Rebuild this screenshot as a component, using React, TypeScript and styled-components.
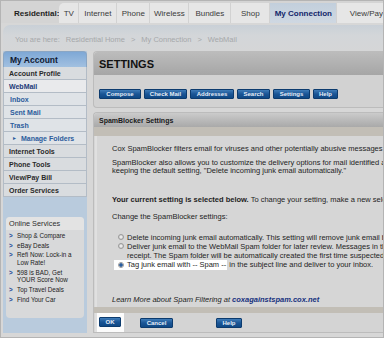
import React from "react";
import styled, { createGlobalStyle } from "styled-components";

const Global = createGlobalStyle`
  html, body {
    margin: 0;
    padding: 0;
    background: #d8d8d8;
    font-family: "Liberation Sans", Arial, sans-serif;
  }
`;

// marco general
const Frame = styled.div`
  width: 384px;
  height: 338px;
  box-sizing: border-box;
  border: 1px solid #b4b4b4;
  background: #d7d7d7;
  display: flex;
  flex-direction: column;
  overflow: hidden;
`;

// barra superior
const TopNav = styled.div`
  height: 22px;
  display: flex;
  align-items: stretch;
  background: #d4d4d4;
  font-size: 8px;
  color: #333;
`;

const NavLabel = styled.div`
  width: 65px;
  display: flex;
  align-items: center;
  padding-left: 13px;
  box-sizing: border-box;
  font-weight: bold;
  color: #1e1e1e;
  padding-top: 3px;
`;

const Tabs = styled.div`
  flex: 1;
  display: flex;
  background: #e6e6e6;
  border-top-left-radius: 5px;
  margin-top: 2px;
`;

const Tab = styled.div<{ $w: number; $active?: boolean }>`
  width: ${(p) => p.$w}px;
  flex-shrink: 0;
  display: flex;
  align-items: center;
  justify-content: center;
  white-space: nowrap;
  border-right: 1px solid #d2d2d2;
  box-sizing: border-box;
  padding-top: 1px;
  background: ${(p) => (p.$active ? "linear-gradient(#c2cfdc, #cfd8e2)" : "transparent")};
  color: ${(p) => (p.$active ? "#12256a" : "#3a3a3a")};
  font-weight: ${(p) => (p.$active ? "bold" : "normal")};
`;

const Crumbs = styled.div`
  height: 26px;
  margin: 2px 0 0 2px;
  border-top-left-radius: 7px;
  background: linear-gradient(#c9d0d7, #d3d6d9 40%, #d5d6d7);
  display: flex;
  align-items: center;
  padding: 3px 0 0 12px;
  box-sizing: border-box;
  font-size: 7.5px;
  color: #a6a8aa;
  gap: 6px;
  white-space: nowrap;
`;

const Body = styled.div`
  flex: 1;
  display: flex;
  min-height: 0;
  padding-bottom: 4px;
`;

// menu lateral
const Sidebar = styled.div`
  width: 84px;
  margin-left: 2px;
  flex-shrink: 0;
  display: flex;
  flex-direction: column;
  background: #b9cbdd;
`;

const SideHead = styled.div`
  height: 15px;
  border-radius: 4px 4px 0 0;
  background: linear-gradient(#7ea8d6, #a2c0e0);
  font-size: 8.5px;
  font-weight: bold;
  color: #0f1a33;
  display: flex;
  align-items: center;
  padding-left: 6px;
  border: 1px solid #8aa6c4;
  border-bottom: none;
`;

const SideItem = styled.div<{ $sub?: boolean; $current?: boolean }>`
  height: 13px;
  box-sizing: border-box;
  border: 1px solid #b3bcc6;
  border-top: none;
  background: ${(p) => (p.$current ? "#e9eaec" : p.$sub ? "#dfe3e7" : "#d9dcdf")};
  display: flex;
  align-items: center;
  padding-left: ${(p) => (p.$sub ? 6 : 5)}px;
  font-size: 7px;
  font-weight: bold;
  color: ${(p) => (p.$current ? "#1c3a78" : p.$sub ? "#2c5c9c" : "#2a2a2a")};
  white-space: nowrap;
`;

const Triangle = styled.span`
  font-size: 5px;
  margin: 0 4px 0 2px;
`;

const Promo = styled.div`
  margin: 20px 3px 0 3px;
  background: #d8d9da;
  border-radius: 4px;
  padding-bottom: 14px;
`;

const PromoHead = styled.div`
  height: 13px;
  display: flex;
  align-items: center;
  padding-left: 3px;
  border-radius: 4px 4px 0 0;
  background: #e3e3e3;
  font-size: 7.3px;
  color: #2e2e2e;
  margin-bottom: 1px;
`;

const PromoItem = styled.div`
  display: flex;
  font-size: 6.3px;
  line-height: 7.5px;
  color: #222;
  padding: 1.1px 2px 1.1px 3px;
`;

const Arrow = styled.span`
  color: #1e4f9c;
  font-weight: bold;
  width: 8px;
  flex-shrink: 0;
`;

// contenido principal
const Main = styled.div`
  flex: 1;
  margin-left: 6px;
  display: flex;
  flex-direction: column;
  min-width: 0;
  overflow: hidden;
`;

const SettingsCard = styled.div`
  height: 55px;
  border: 1px solid #bcbcbc;
  border-right: none;
  border-radius: 4px 0 0 4px;
  background: #d2d2d2;
  display: flex;
  flex-direction: column;
`;

const SettingsHead = styled.div`
  height: 23px;
  border-top-left-radius: 4px;
  background: linear-gradient(#bcbcbc, #a6a6a6);
  display: flex;
  align-items: center;
  padding-left: 5px;
  font-size: 11px;
  font-weight: bold;
  color: #111;
  padding-top: 1px;
  box-sizing: border-box;
`;

const Toolbar = styled.div`
  display: flex;
  gap: 3px;
  padding: 14px 0 0 5px;
`;

const BlueButton = styled.div<{ $w: number }>`
  width: ${(p) => p.$w}px;
  height: 10px;
  flex-shrink: 0;
  box-sizing: border-box;
  border: 1px solid #0c3b6e;
  border-radius: 1px;
  background: linear-gradient(#3f7cb8, #1a5595 50%, #0f4885);
  color: #e6eef8;
  font-size: 6px;
  font-weight: bold;
  display: flex;
  align-items: center;
  justify-content: center;
  white-space: nowrap;
`;

const Panel = styled.div`
  flex: 1;
  margin-top: 4px;
  border: 1px solid #bcbcbc;
  border-right: none;
  border-radius: 4px 0 0 0;
  display: flex;
  flex-direction: column;
  background: #d6d6d6;
`;

const PanelHead = styled.div`
  height: 14px;
  border-top-left-radius: 4px;
  background: linear-gradient(#cbcbcb, #a9a9a9);
  display: flex;
  align-items: center;
  padding-left: 5px;
  font-size: 7px;
  font-weight: bold;
  color: #1a1a1a;
`;

const Band = styled.div<{ $h: number }>`
  height: ${(p) => p.$h}px;
  background: #c2beb6;
`;

const PanelBody = styled.div`
  flex: 1;
  padding: 7px 0 0 15px;
  font-size: 7.5px;
  line-height: 8.5px;
  color: #1e1e1e;
  white-space: nowrap;
  border-left: 2px solid #e0e0e0;
  margin-left: 1px;
`;

const Para = styled.div<{ $mt?: number }>`
  margin-top: ${(p) => p.$mt ?? 0}px;
`;

const Options = styled.div`
  margin: 11px 0 0 6px;
  line-height: 9.3px;
`;

const Option = styled.div<{ $indent?: boolean }>`
  display: flex;
  align-items: center;
  padding-left: ${(p) => (p.$indent ? 9 : 0)}px;
`;

const Mark = styled.span<{ $highlight?: boolean }>`
  display: inline-flex;
  align-items: center;
  background: ${(p) => (p.$highlight ? "#ffffff" : "transparent")};
  padding: 0 1px 0 4px;
  margin-left: -4px;
`;

const Radio = styled.span<{ $on?: boolean }>`
  width: 6px;
  height: 6px;
  border-radius: 50%;
  box-sizing: border-box;
  border: 1px solid #9a9a9a;
  background: ${(p) =>
    p.$on ? "radial-gradient(#2a5d9e 0 1.5px, #dfe6ee 2px)" : "radial-gradient(#fafafa, #bdbdbd)"};
  margin-right: 3px;
  flex-shrink: 0;
`;

const Learn = styled.div`
  margin-top: 26px;
  font-style: italic;
`;

const Link = styled.span`
  font-weight: bold;
  color: #17317e;
`;

const Footer = styled.div`
  height: 19px;
  display: flex;
  align-items: center;
  background: #d4d4d4;
  border-left: 2px solid #e0e0e0;
  margin-left: 1px;
`;

const OkWrap = styled.div`
  background: #fbfbfb;
  padding: 4px 3px 5px 2px;
  margin-right: 16px;
`;

const Pad = styled.div<{ $w: number }>`
  width: ${(p) => p.$w}px;
  flex-shrink: 0;
`;

const App: React.FC = () => {
  return (
    <>
      <Global />
      <Frame>
        <TopNav>
          <NavLabel>Residential:</NavLabel>
          <Tabs>
            <Tab $w={20}>TV</Tab>
            <Tab $w={38}>Internet</Tab>
            <Tab $w={33}>Phone</Tab>
            <Tab $w={39}>Wireless</Tab>
            <Tab $w={42}>Bundles</Tab>
            <Tab $w={39}>Shop</Tab>
            <Tab $w={67} $active>
              My Connection
            </Tab>
            <Tab $w={72}>View/Pay Bill</Tab>
          </Tabs>
        </TopNav>

        <Crumbs>
          <span>You are here:</span>
          <span>Residential Home</span>
          <span>&gt;</span>
          <span>My Connection</span>
          <span>&gt;</span>
          <span>WebMail</span>
        </Crumbs>

        <Body>
          <Sidebar>
            <SideHead>My Account</SideHead>
            <SideItem>Account Profile</SideItem>
            <SideItem $current>WebMail</SideItem>
            <SideItem $sub>Inbox</SideItem>
            <SideItem $sub>Sent Mail</SideItem>
            <SideItem $sub>Trash</SideItem>
            <SideItem $sub>
              <Triangle>►</Triangle>Manage Folders
            </SideItem>
            <SideItem>Internet Tools</SideItem>
            <SideItem>Phone Tools</SideItem>
            <SideItem>View/Pay Bill</SideItem>
            <SideItem>Order Services</SideItem>

            <Promo>
              <PromoHead>Online Services</PromoHead>
              <PromoItem>
                <Arrow>&gt;</Arrow>Shop &amp; Compare
              </PromoItem>
              <PromoItem>
                <Arrow>&gt;</Arrow>eBay Deals
              </PromoItem>
              <PromoItem>
                <Arrow>&gt;</Arrow>
                <span>
                  Refi Now: Lock-in a
                  <br />
                  Low Rate!
                </span>
              </PromoItem>
              <PromoItem>
                <Arrow>&gt;</Arrow>
                <span>
                  598 is BAD, Get
                  <br />
                  YOUR Score Now
                </span>
              </PromoItem>
              <PromoItem>
                <Arrow>&gt;</Arrow>Top Travel Deals
              </PromoItem>
              <PromoItem>
                <Arrow>&gt;</Arrow>Find Your Car
              </PromoItem>
            </Promo>
          </Sidebar>

          <Main>
            <SettingsCard>
              <SettingsHead>SETTINGS</SettingsHead>
              <Toolbar>
                <BlueButton $w={42}>Compose</BlueButton>
                <BlueButton $w={43}>Check Mail</BlueButton>
                <BlueButton $w={44}>Addresses</BlueButton>
                <BlueButton $w={33}>Search</BlueButton>
                <BlueButton $w={37}>Settings</BlueButton>
                <BlueButton $w={25}>Help</BlueButton>
              </Toolbar>
            </SettingsCard>

            <Panel>
              <PanelHead>SpamBlocker Settings</PanelHead>
              <Band $h={9} />
              <PanelBody>
                <Para $mt={2}>
                  Cox SpamBlocker filters email for viruses and other potentially abusive messages before
                  they reach your inbox.
                </Para>
                <Para $mt={5}>
                  SpamBlocker also allows you to customize the delivery options for mail identified as
                  potential spam.
                  <br />
                  keeping the default setting, "Delete incoming junk email automatically."
                </Para>
                <Para $mt={20}>
                  <b>Your current setting is selected below.</b> To change your setting, make a new selection
                  and click OK.
                </Para>
                <Para $mt={9}>Change the SpamBlocker settings:</Para>
                <Options>
                  <Option>
                    <Radio />
                    Delete incoming junk email automatically. This setting will remove junk email before it
                    reaches you.
                  </Option>
                  <Option>
                    <Radio />
                    Deliver junk email to the WebMail Spam folder for later review. Messages in the Spam
                    folder
                  </Option>
                  <Option $indent>
                    receipt. The Spam folder will be automatically created the first time suspected junk
                    email arrives.
                  </Option>
                  <Option>
                    <Mark $highlight>
                      <Radio $on />
                      Tag junk email with -- Spam --
                    </Mark>
                    &nbsp;in the subject line and deliver to your inbox.
                  </Option>
                </Options>
                <Learn>
                  Learn More about Spam Filtering at <Link>coxagainstspam.cox.net</Link>
                </Learn>
              </PanelBody>
              <Band $h={6} />
              <Footer>
                <OkWrap>
                  <BlueButton $w={22}>OK</BlueButton>
                </OkWrap>
                <BlueButton $w={33}>Cancel</BlueButton>
                <Pad $w={43} />
                <BlueButton $w={26}>Help</BlueButton>
              </Footer>
            </Panel>
          </Main>
        </Body>
      </Frame>
    </>
  );
};

export default App;
